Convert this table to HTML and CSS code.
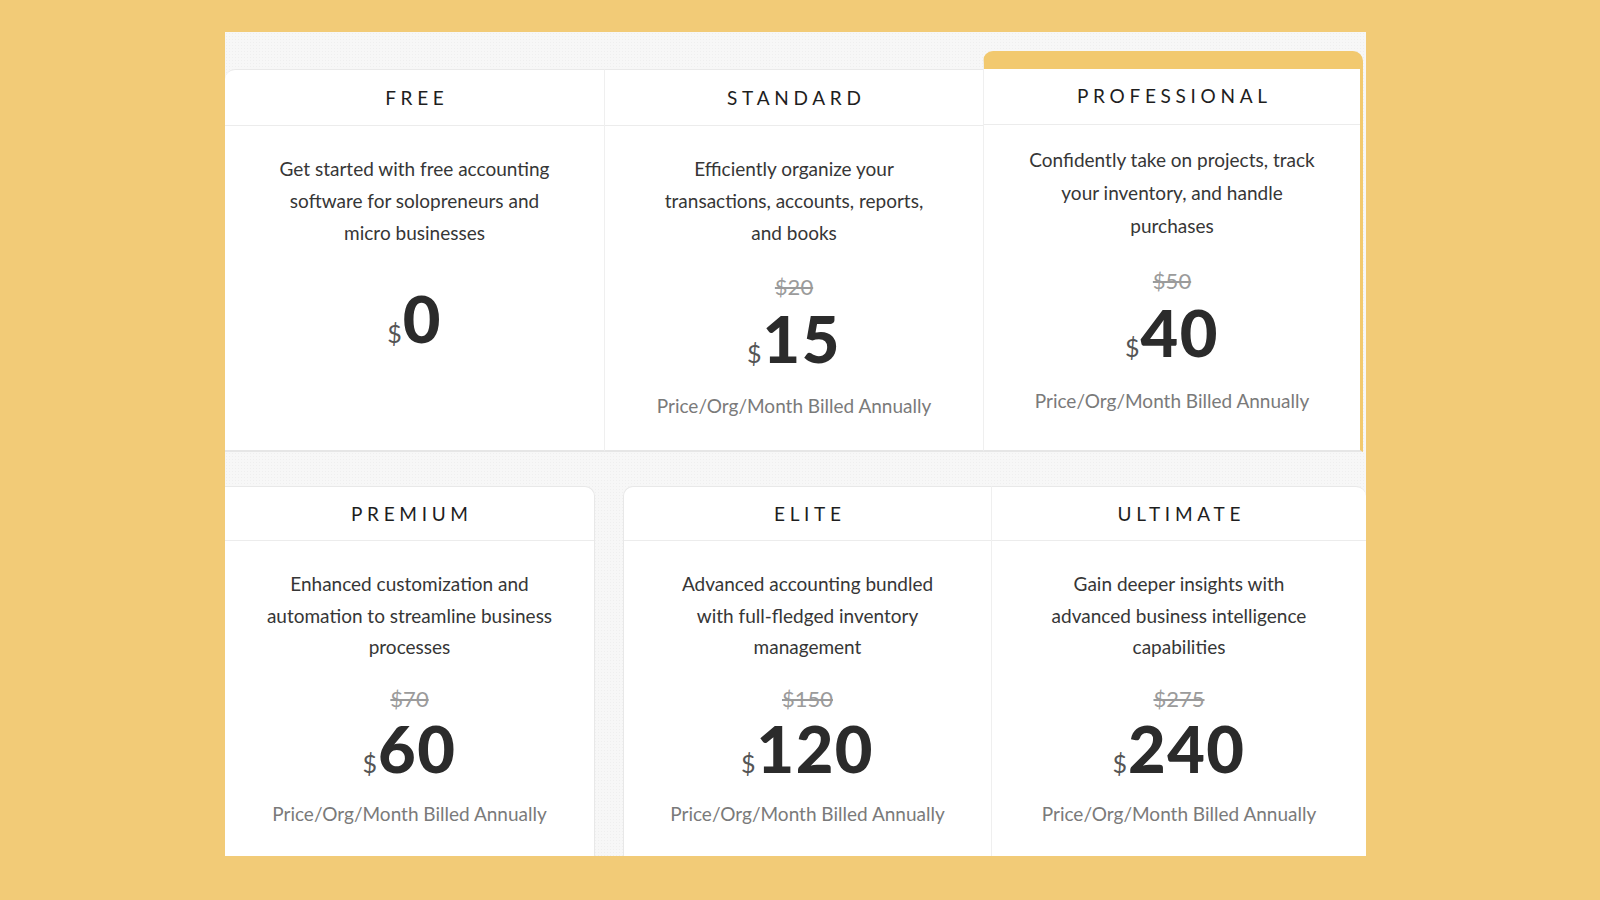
FILE: index.html
```html
<!DOCTYPE html>
<html lang="en">
<head>
<meta charset="utf-8">
<title>Pricing</title>
<link rel="stylesheet" href="styles.css">
</head>
<body>
<div class="panel">
  <div class="row-top">
    <div class="plan plan-first">
      <div class="plan-head">FREE</div>
      <div class="plan-desc">Get started with free accounting<br>software for solopreneurs and<br>micro businesses</div>
      <div class="price price-solo"><span class="cur">$</span><span class="amt">0</span></div>
    </div>
    <div class="plan">
      <div class="plan-head">STANDARD</div>
      <div class="plan-desc">Efficiently organize your<br>transactions, accounts, reports,<br>and books</div>
      <div class="old">$20</div>
      <div class="price"><span class="cur">$</span><span class="amt">15</span></div>
      <div class="label">Price/Org/Month Billed Annually</div>
    </div>
    <div class="plan plan-featured">
      <div class="plan-head">PROFESSIONAL</div>
      <div class="plan-desc">Confidently take on projects, track<br>your inventory, and handle<br>purchases</div>
      <div class="old">$50</div>
      <div class="price"><span class="cur">$</span><span class="amt">40</span></div>
      <div class="label">Price/Org/Month Billed Annually</div>
    </div>
  </div>
  <div class="row-bottom">
    <div class="plan plan-premium">
      <div class="plan-head">PREMIUM</div>
      <div class="plan-desc">Enhanced customization and<br>automation to streamline business<br>processes</div>
      <div class="old">$70</div>
      <div class="price"><span class="cur">$</span><span class="amt">60</span></div>
      <div class="label">Price/Org/Month Billed Annually</div>
    </div>
    <div class="pair">
      <div class="plan plan-elite">
        <div class="plan-head">ELITE</div>
        <div class="plan-desc">Advanced accounting bundled<br>with full-fledged inventory<br>management</div>
        <div class="old">$150</div>
        <div class="price"><span class="cur">$</span><span class="amt">120</span></div>
        <div class="label">Price/Org/Month Billed Annually</div>
      </div>
      <div class="plan plan-ultimate">
        <div class="plan-head">ULTIMATE</div>
        <div class="plan-desc">Gain deeper insights with<br>advanced business intelligence<br>capabilities</div>
        <div class="old">$275</div>
        <div class="price"><span class="cur">$</span><span class="amt">240</span></div>
        <div class="label">Price/Org/Month Billed Annually</div>
      </div>
    </div>
  </div>
</div>
</body>
</html>
```
FILE: styles.css
```css
* { box-sizing: border-box; }
html, body { margin: 0; padding: 0; }
body {
  background: #f2cb77;
  width: 1600px;
  height: 900px;
  overflow: hidden;
  font-family: Lato, "Liberation Sans", sans-serif;
}
.panel {
  margin: 32px 0 0 225px;
  width: 1141px;
  height: 824px;
  padding-top: 37px;
  background-color: #f7f7f7;
  background-image: radial-gradient(#efefef 0.6px, transparent 0.8px);
  background-size: 3px 3px;
}
.plan {
  background: #fff;
  text-align: center;
  color: #333;
}
.plan-head {
  font-size: 19px;
  letter-spacing: 4.7px;
  padding-left: 4.7px;
  color: #1e1e1e;
  height: 56px;
  line-height: 55px;
  border-bottom: 1px solid #ececec;
}
.plan-desc {
  font-size: 19px;
  line-height: 32px;
  padding-top: 27px;
  color: #363636;
  white-space: nowrap;
}
.old {
  margin-top: 28px;
  font-size: 22px;
  line-height: 20px;
  color: #9b9b9b;
  text-decoration: line-through;
}
.price {
  margin-top: 9px;
  height: 64px;
  line-height: 64px;
  white-space: nowrap;
}
.price-solo { margin-top: 37px; }
.cur {
  font-size: 25px;
  color: #555;
  margin-right: 1px;
}
.amt {
  font-size: 65px;
  font-weight: 900;
  color: #2b2b2b;
  letter-spacing: 1.5px;
}
.label {
  margin-top: 24px;
  font-size: 19px;
  line-height: 24px;
  color: #7a7a7a;
}

/* top row */
.row-top {
  display: grid;
  grid-template-columns: 379px 379px 380px;
  height: 383px;
  align-items: stretch;
}
.row-top .plan {
  border-top: 1px solid #e9e9e9;
  border-bottom: 2px solid #e6e6e6;
}
.row-top .plan + .plan { border-left: 1px solid #efefef; }
.plan-first { border-top-left-radius: 10px; }
.row-top .plan-featured {
  margin-top: -18px;
  border: 3px solid #f2c96f;
  border-top: 18px solid #f2c96f;
  border-bottom: 2px solid #e6e6e6;
  border-radius: 10px 10px 0 0;
}
.plan-featured .plan-head { line-height: 53px; }
.plan-featured .plan-desc { padding-top: 18px; line-height: 33px; }
.plan-featured .old { margin-top: 29px; }
.plan-featured .label { margin-top: 25px; }

/* bottom row */
.row-bottom {
  display: flex;
  margin-top: 34px;
  height: 370px;
}
.row-bottom .plan { border-top: 1px solid #e8e8e8; }
.row-bottom .plan-head { height: 54px; line-height: 53px; }
.row-bottom .plan-desc { padding-top: 27px; line-height: 31.6px; }
.row-bottom .old { margin-top: 26px; }
.row-bottom .price { margin-top: 7px; }
.row-bottom .label { margin-top: 22px; }
.plan-premium {
  width: 370px;
  border-right: 1px solid #e8e8e8;
  border-top-right-radius: 10px;
}
.pair {
  display: flex;
  margin-left: 28px;
}
.plan-elite {
  width: 368px;
  border-left: 1px solid #e8e8e8;
  border-top-left-radius: 10px;
}
.plan-ultimate {
  width: 375px;
  border-left: 1px solid #efefef;
  border-top-right-radius: 10px;
}
```
